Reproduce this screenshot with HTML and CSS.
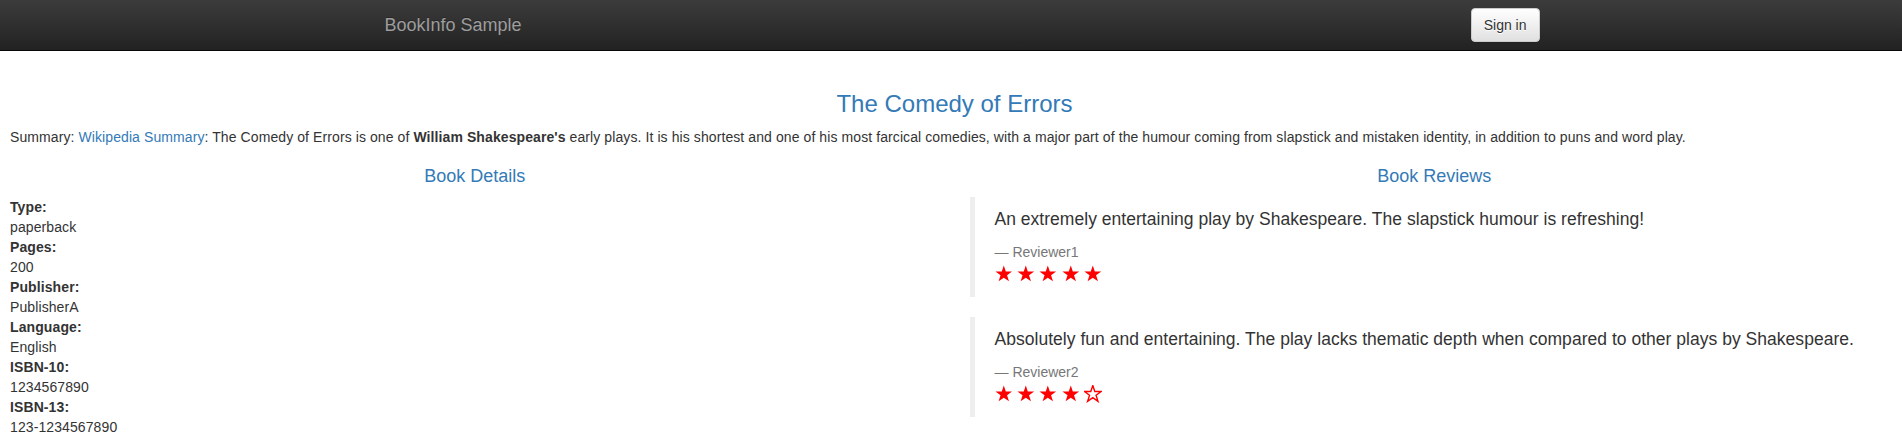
FILE: index.html
```html
<!DOCTYPE html>
<html>
<head>
<meta charset="utf-8">
<title>Simple Bookstore App</title>
<link rel="stylesheet" href="styles.css">
</head>
<body>
<nav class="navbar">
  <div class="navbar-frame">
    <div class="nav-container">
      <a class="navbar-brand" href="#">BookInfo Sample</a>
      <button type="button" class="btn-signin">Sign in</button>
    </div>
  </div>
</nav>
<main class="page">
  <h3 class="title">The Comedy of Errors</h3>
  <p class="summary">Summary: <a class="link" href="#">Wikipedia Summary</a>: The Comedy of Errors is one of <b>William Shakespeare's</b> early plays. It is his shortest and one of his most farcical comedies, with a major part of the humour coming from slapstick and mistaken identity, in addition to puns and word play.</p>
  <div class="columns">
    <section class="col">
      <h4 class="col-title">Book Details</h4>
      <dl class="details">
        <dt>Type:</dt><dd>paperback</dd>
        <dt>Pages:</dt><dd>200</dd>
        <dt>Publisher:</dt><dd>PublisherA</dd>
        <dt>Language:</dt><dd>English</dd>
        <dt>ISBN-10:</dt><dd>1234567890</dd>
        <dt>ISBN-13:</dt><dd>123-1234567890</dd>
      </dl>
    </section>
    <section class="col">
      <h4 class="col-title">Book Reviews</h4>
      <blockquote class="review">
        <p class="review-text">An extremely entertaining play by Shakespeare. The slapstick humour is refreshing!</p>
        <small class="reviewer">— Reviewer1</small>
        <div class="stars">
          <svg class="star" viewBox="0 0 100 100"><polygon class="full" points="50,3 61.5,37 97.5,37 68.5,58.5 79.5,93 50,72 20.5,93 31.5,58.5 2.5,37 38.5,37"/></svg>
          <svg class="star" viewBox="0 0 100 100"><polygon class="full" points="50,3 61.5,37 97.5,37 68.5,58.5 79.5,93 50,72 20.5,93 31.5,58.5 2.5,37 38.5,37"/></svg>
          <svg class="star" viewBox="0 0 100 100"><polygon class="full" points="50,3 61.5,37 97.5,37 68.5,58.5 79.5,93 50,72 20.5,93 31.5,58.5 2.5,37 38.5,37"/></svg>
          <svg class="star" viewBox="0 0 100 100"><polygon class="full" points="50,3 61.5,37 97.5,37 68.5,58.5 79.5,93 50,72 20.5,93 31.5,58.5 2.5,37 38.5,37"/></svg>
          <svg class="star" viewBox="0 0 100 100"><polygon class="full" points="50,3 61.5,37 97.5,37 68.5,58.5 79.5,93 50,72 20.5,93 31.5,58.5 2.5,37 38.5,37"/></svg>
        </div>
      </blockquote>
      <blockquote class="review">
        <p class="review-text">Absolutely fun and entertaining. The play lacks thematic depth when compared to other plays by Shakespeare.</p>
        <small class="reviewer">— Reviewer2</small>
        <div class="stars">
          <svg class="star" viewBox="0 0 100 100"><polygon class="full" points="50,3 61.5,37 97.5,37 68.5,58.5 79.5,93 50,72 20.5,93 31.5,58.5 2.5,37 38.5,37"/></svg>
          <svg class="star" viewBox="0 0 100 100"><polygon class="full" points="50,3 61.5,37 97.5,37 68.5,58.5 79.5,93 50,72 20.5,93 31.5,58.5 2.5,37 38.5,37"/></svg>
          <svg class="star" viewBox="0 0 100 100"><polygon class="full" points="50,3 61.5,37 97.5,37 68.5,58.5 79.5,93 50,72 20.5,93 31.5,58.5 2.5,37 38.5,37"/></svg>
          <svg class="star" viewBox="0 0 100 100"><polygon class="full" points="50,3 61.5,37 97.5,37 68.5,58.5 79.5,93 50,72 20.5,93 31.5,58.5 2.5,37 38.5,37"/></svg>
          <svg class="star" viewBox="0 0 100 100"><polygon class="empty" points="50,3 61.5,37 97.5,37 68.5,58.5 79.5,93 50,72 20.5,93 31.5,58.5 2.5,37 38.5,37"/></svg>
        </div>
      </blockquote>
    </section>
  </div>
</main>
</body>
</html>
```
FILE: styles.css
```css
* { box-sizing: border-box; }

html, body {
  margin: 0;
  padding: 0;
  background: #fff;
}

body {
  font-family: "Liberation Sans", Arial, Helvetica, sans-serif;
  font-size: 14px;
  line-height: 1.42857143;
  color: #333;
}

/* Navbar */
.navbar {
  background-color: #222;
  background-image: linear-gradient(to bottom, #3c3c3c 0, #222 100%);
  border-bottom: 1px solid #080808;
  min-height: 51px;
  margin-bottom: 20px;
}

.navbar-frame {
  padding: 0 3px 0 10px;
}

.nav-container {
  width: 1170px;
  margin: 0 auto;
  display: flex;
  justify-content: space-between;
  align-items: flex-start;
}

.navbar-brand {
  display: block;
  height: 50px;
  padding: 15px;
  font-size: 18px;
  line-height: 20px;
  color: #9d9d9d;
  text-decoration: none;
  text-shadow: 0 -1px 0 rgba(0, 0, 0, .25);
}

.btn-signin {
  margin-top: 8px;
  height: 34px;
  padding: 6px 12px;
  font-family: inherit;
  font-size: 14px;
  line-height: 20px;
  color: #333;
  background-color: #fff;
  background-image: linear-gradient(to bottom, #fff 0, #e0e0e0 100%);
  border: 1px solid #ccc;
  border-radius: 4px;
  text-shadow: 0 1px 0 #fff;
  box-shadow: inset 0 1px 0 rgba(255, 255, 255, .15), 0 1px 1px rgba(0, 0, 0, .075);
  cursor: pointer;
}

/* Main page */
.page {
  display: flow-root;
  padding: 0 3px 0 10px;
}

.title {
  margin: 20px 0 10px;
  font-size: 24px;
  font-weight: 500;
  line-height: 1.1;
  text-align: center;
  color: #337ab7;
}

.summary {
  margin: 0 0 10px;
  letter-spacing: 0.09px;
}

.summary b {
  font-weight: 700;
}

.link {
  color: #337ab7;
  text-decoration: none;
}

.columns {
  display: grid;
  grid-template-columns: 1fr 1fr;
  column-gap: 30px;
}

.col-title {
  margin: 10px 0 10px;
  font-size: 18px;
  font-weight: 500;
  line-height: 1.1;
  text-align: center;
  color: #337ab7;
}

.details {
  margin: 0 0 20px;
  letter-spacing: 0.1px;
}

.details dt {
  font-weight: 700;
  line-height: 20px;
}

.details dd {
  margin: 0;
  line-height: 20px;
}

/* Reviews */
.review {
  margin: 0 0 20px;
  padding: 10px 20px;
  border-left: 5px solid #eee;
  font-size: 17.5px;
}

.review-text {
  margin: 0 0 10px;
  line-height: 25px;
  letter-spacing: 0.025px;
}

.reviewer {
  display: block;
  font-size: 14px;
  line-height: 20px;
  color: #777;
}

.stars {
  display: flex;
  gap: 4.9px;
  height: 25px;
  padding-top: 3px;
}

.star {
  width: 17.6px;
  height: 17.6px;
}

.star .full {
  fill: #f00;
}

.star .empty {
  fill: #fff;
  stroke: #f00;
  stroke-width: 8;
  stroke-linejoin: miter;
}
```
